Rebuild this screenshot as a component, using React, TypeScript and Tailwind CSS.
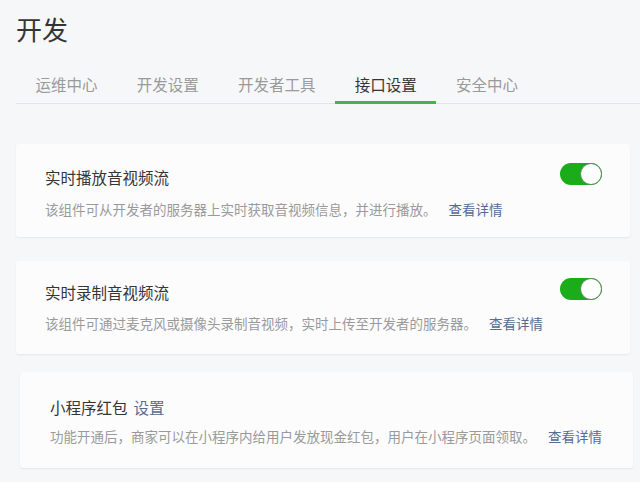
import clsx from 'clsx';

const TABS = ['运维中心', '开发设置', '开发者工具', '接口设置', '安全中心'];

type CardProps = {
  title: string;
  action?: string;
  desc: string;
  toggle?: boolean;
  className?: string;
  descClassName?: string;
};

const Toggle = () => (
  <span className="relative -mt-[7px] inline-block h-[22px] w-[42px] rounded-full bg-[#1aad19]">
    <span className="absolute right-0 top-0 size-[22px] rounded-full border border-[#5c8a5c] bg-white" />
  </span>
);

const Card = ({ title, action, desc, toggle, className, descClassName }: CardProps) => (
  <div
    className={clsx(
      'rounded-[3px] bg-[#fcfcfd] shadow-[0_1px_2px_rgba(0,0,0,0.07)]',
      className,
    )}
  >
    <div className="flex items-center justify-between">
      <h3 className="text-[15.5px] leading-[22px] font-normal text-[#353535]">
        {title}
        {action && <a className="ml-[6px] text-[#576b95]">{action}</a>}
      </h3>
      {toggle && <Toggle />}
    </div>
    <p className={clsx('text-[13.5px] leading-[20px] text-[#9a9a9a]', descClassName)}>
      {desc}
      <a className="ml-[12px] text-[#576b95]">查看详情</a>
    </p>
  </div>
);

export default function App() {
  return (
    <div
      className="h-[482px] w-[640px] overflow-hidden bg-[#f6f7f9]"
      style={{ fontFamily: '"Noto Sans CJK SC", "Noto Sans", sans-serif' }}
    >
      <div className="pl-[16px] pt-[12px]">
        <h1 className="text-[26px] leading-[34px] font-normal text-[#353535]">开发</h1>
        <div className="mt-[16px] flex border-b border-[#e4e5e8]">
          {TABS.map((tab) => (
            <div
              key={tab}
              className={clsx(
                '-mb-px border-b-[3px] px-[19.6px] pt-[11px] pb-[6px] text-[15.5px] leading-[22px]',
                tab === '接口设置'
                  ? 'border-[#44b549] text-[#353535]'
                  : 'border-transparent text-[#9a9a9a]',
              )}
            >
              {tab}
            </div>
          ))}
        </div>
      </div>

      <div className="mt-[40px] flex flex-col">
        <Card
          className="mr-[10px] ml-[16px] pt-[22px] pr-[28px] pb-[18px] pl-[29px]"
          descClassName="mt-[11px]"
          title="实时播放音视频流"
          desc="该组件可从开发者的服务器上实时获取音视频信息，并进行播放。"
          toggle
        />
        <Card
          className="mt-[24px] mr-[10px] ml-[16px] pt-[20px] pr-[28px] pb-[21px] pl-[29px]"
          descClassName="mt-[10px]"
          title="实时录制音视频流"
          desc="该组件可通过麦克风或摄像头录制音视频，实时上传至开发者的服务器。"
          toggle
        />
        <Card
          className="mt-[18px] mr-[7px] ml-[20px] pt-[24px] pr-[28px] pb-[22px] pl-[30px]"
          descClassName="mt-[8px]"
          title="小程序红包"
          action="设置"
          desc="功能开通后，商家可以在小程序内给用户发放现金红包，用户在小程序页面领取。"
        />
      </div>
    </div>
  );
}
